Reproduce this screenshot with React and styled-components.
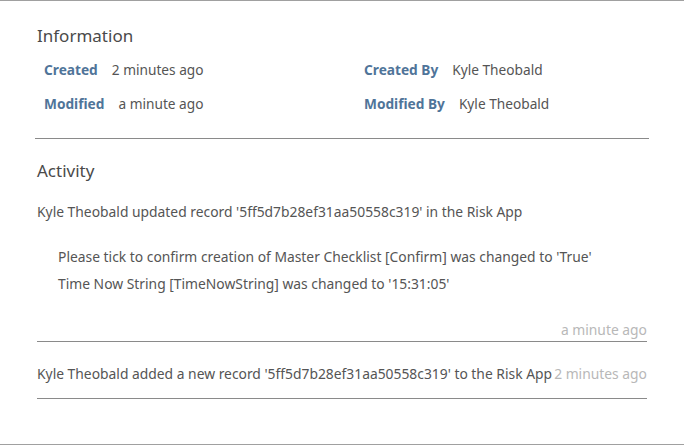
import React from "react";
import styled, { createGlobalStyle } from "styled-components";

const Global = createGlobalStyle`
  html, body {
    margin: 0;
    padding: 0;
    background: #fff;
  }
  body {
    font-family: "Noto Sans", "Open Sans", sans-serif;
    color: #555;
  }
`;

const Card = styled.div`
  box-sizing: border-box;
  width: 684px;
  height: 445px;
  border-top: 1px solid #a0a0a0;
  border-bottom: 1px solid #a0a0a0;
  background: #fff;
`;

const Section = styled.section`
  margin: 0 35px;
  padding: ${(p) => p.$pad || "0"};
  border-bottom: ${(p) => (p.$divider ? "1px solid #8a8a8a" : "none")};
`;

const Heading = styled.h3`
  margin: 0 0 0 2px;
  font-size: 17px;
  font-weight: 400;
  line-height: 22px;
  color: #4a4a4a;
`;

const InfoGrid = styled.div`
  display: grid;
  grid-template-columns: 320px 1fr;
  row-gap: 12px;
  margin-top: 11px;
  padding-left: 9px;
`;

const Field = styled.div`
  display: flex;
  align-items: center;
  height: 22px;
  font-size: 13.7px;
`;

const Label = styled.span`
  font-weight: 700;
  color: #4f7499;
  margin-right: 14px;
`;

const Value = styled.span`
  color: #555;
`;

const Entry = styled.div`
  margin-left: 2px;
  padding-top: ${(p) => p.$top || "0"};
  border-bottom: 1px solid #8a8a8a;
  font-size: 13.85px;
  color: #555;
`;

const EntryLine = styled.div`
  display: flex;
  justify-content: space-between;
  white-space: nowrap;
  line-height: 22px;
  padding-bottom: ${(p) => p.$bottom || "0"};
`;

const Changes = styled.ul`
  list-style: none;
  margin: 23px 0 0 21px;
  padding: 0;
  li {
    line-height: 22px;
    margin-bottom: 5px;
  }
`;

const Time = styled.div`
  text-align: right;
  color: #b8b8b8;
  line-height: 22px;
  margin-top: ${(p) => p.$top || "0"};
`;

const Stamp = styled.span`
  color: #b8b8b8;
`;

export default function App() {
  return (
    <>
      <Global />
      <Card>
        <Section $pad="24px 0 24px" $divider>
          <Heading>Information</Heading>
          <InfoGrid>
            <Field>
              <Label>Created</Label>
              <Value>2 minutes ago</Value>
            </Field>
            <Field>
              <Label>Created By</Label>
              <Value>Kyle Theobald</Value>
            </Field>
            <Field>
              <Label>Modified</Label>
              <Value>a minute ago</Value>
            </Field>
            <Field>
              <Label>Modified By</Label>
              <Value>Kyle Theobald</Value>
            </Field>
          </InfoGrid>
        </Section>
        <Section $pad="21px 2px 0 0">
          <Heading>Activity</Heading>
          <Entry $top="19px">
            <EntryLine>
              Kyle Theobald updated record '5ff5d7b28ef31aa50558c319' in the Risk App
            </EntryLine>
            <Changes>
              <li>
                Please tick to confirm creation of Master Checklist [Confirm] was changed to 'True'
              </li>
              <li>Time Now String [TimeNowString] was changed to '15:31:05'</li>
            </Changes>
            <Time $top="24px">a minute ago</Time>
          </Entry>
          <Entry $top="21px">
            <EntryLine $bottom="13px">
              <span>
                Kyle Theobald added a new record '5ff5d7b28ef31aa50558c319' to the Risk App
              </span>
              <Stamp>2 minutes ago</Stamp>
            </EntryLine>
          </Entry>
        </Section>
      </Card>
    </>
  );
}
